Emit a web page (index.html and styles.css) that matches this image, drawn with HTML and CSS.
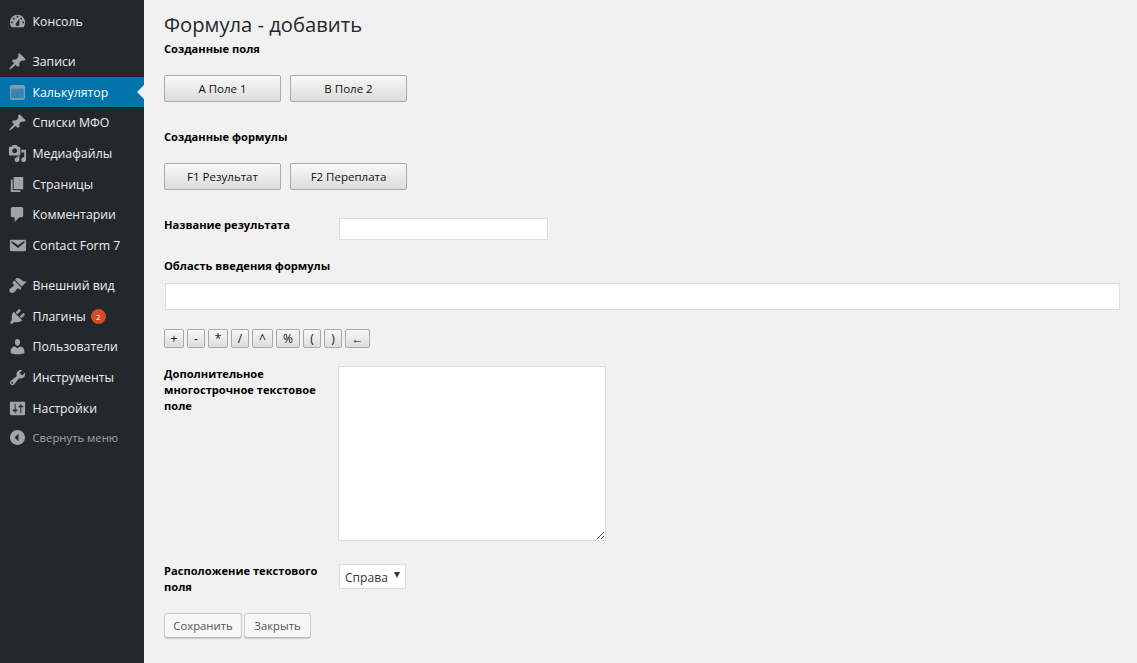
FILE: index.html
```html
<!DOCTYPE html>
<html lang="ru">
<head>
<meta charset="utf-8">
<title>Формула - добавить</title>
<link rel="stylesheet" href="styles.css">
</head>
<body>
<div class="app">
  <nav class="sidebar">
    <ul class="menu">
      <li class="item"><svg class="ic" viewBox="0 0 20 20"><path fill-rule="evenodd" d="M3.76 16h12.48c1.1-1.37 1.76-3.11 1.76-5 0-4.42-3.58-8-8-8s-8 3.58-8 8c0 1.89.66 3.63 1.76 5zM10 4c.55 0 1 .45 1 1s-.45 1-1 1-1-.45-1-1 .45-1 1-1zM6 6c.55 0 1 .45 1 1s-.45 1-1 1-1-.45-1-1 .45-1 1-1zm8 0c.55 0 1 .45 1 1s-.45 1-1 1-1-.45-1-1 .45-1 1-1zm-5.37 5.55L12 7v6c0 1.1-.9 2-2 2s-2-.9-2-2c0-.57.24-1.08.63-1.45zM4 10c.55 0 1 .45 1 1s-.45 1-1 1-1-.45-1-1 .45-1 1-1zm12 0c.55 0 1 .45 1 1s-.45 1-1 1-1-.45-1-1 .45-1 1-1z"/></svg>Консоль</li>
      <li class="item sep"><svg class="ic" viewBox="0 0 20 20"><path d="M10.44 3.02l1.82-1.82 6.36 6.35-1.83 1.82c-1.05-.68-2.48-.57-3.41.36l-.75.75c-.92.93-1.04 2.35-.35 3.41l-1.83 1.82-2.41-2.41-2.8 2.79c-.42.42-3.38 2.71-3.8 2.29s1.86-3.39 2.28-3.81l2.79-2.79L4.1 9.36l1.83-1.82c1.05.69 2.48.57 3.4-.36l.75-.75c.93-.92 1.05-2.35.36-3.41z"/></svg>Записи</li>
      <li class="item active"><svg class="ic" viewBox="0 0 20 20"><rect class="calc-body" x="2" y="2" width="16" height="16" rx="2.500"/><rect class="calc-top" x="3.500" y="6" width="13" height="10"/><path class="calc-red" d="M3.500 7.500h7"/><path class="calc-grid" d="M4 10h12M4 13h12M8 8v8M12 8v8"/></svg>Калькулятор</li>
      <li class="item"><svg class="ic" viewBox="0 0 20 20"><path d="M10.44 3.02l1.82-1.82 6.36 6.35-1.83 1.82c-1.05-.68-2.48-.57-3.41.36l-.75.75c-.92.93-1.04 2.35-.35 3.41l-1.83 1.82-2.41-2.41-2.8 2.79c-.42.42-3.38 2.71-3.8 2.29s1.86-3.39 2.28-3.81l2.79-2.79L4.1 9.36l1.83-1.82c1.05.69 2.48.57 3.4-.36l.75-.75c.93-.92 1.05-2.35.36-3.41z"/></svg>Списки МФО</li>
      <li class="item"><svg class="ic" viewBox="0 0 20 20"><path d="M13 11V4c0-.55-.45-1-1-1h-1.67L9 1H5L3.67 3H2c-.55 0-1 .45-1 1v7c0 .55.45 1 1 1h10c.55 0 1-.45 1-1zM7 4.500c1.38 0 2.500 1.120 2.500 2.500S8.380 9.500 7 9.500 4.500 8.380 4.500 7 5.620 4.500 7 4.500zM14 6h5v10.500c0 1.380-1.120 2.500-2.500 2.500S14 17.880 14 16.500s1.120-2.500 2.500-2.500c.17 0 .34.02.5.05V9h-3V6zm-4 8.050V13h2v3.500c0 1.380-1.120 2.500-2.500 2.500S7 17.880 7 16.500 8.120 14 9.500 14c.17 0 .34.02.5.05z"/></svg>Медиафайлы</li>
      <li class="item"><svg class="ic" viewBox="0 0 20 20"><path d="M6 15V2h10v13H6zm-1 1h8v2H3V5h2v11z"/></svg>Страницы</li>
      <li class="item"><svg class="ic" viewBox="0 0 20 20"><path d="M5 2h9c1.100 0 2 .9 2 2v7c0 1.100-.9 2-2 2h-2l-5 5v-5H5c-1.100 0-2-.9-2-2V4c0-1.100.9-2 2-2z"/></svg>Комментарии</li>
      <li class="item"><svg class="ic" viewBox="0 0 20 20"><path d="M3.870 4h13.250C18.370 4 19 4.590 19 5.790v8.420c0 1.190-.63 1.790-1.880 1.790H3.870c-1.250 0-1.880-.6-1.880-1.790V5.790c0-1.200.63-1.790 1.880-1.790zm6.620 8.600l6.740-5.530c.24-.2.43-.66.13-1.070-.29-.41-.82-.42-1.170-.17l-5.700 3.860L4.800 5.830c-.35-.25-.88-.24-1.170.17-.3.41-.11.87.13 1.070z"/></svg>Contact Form 7</li>
      <li class="item sep-wide"><svg class="ic" viewBox="0 0 20 20"><path d="M14.480 11.060L7.410 3.990l1.500-1.500c.5-.56 2.300-.47 3.510.32 1.210.8 1.430 1.280 2.910 2.100 1.180.64 2.450 1.260 4.450.85zm-.71.71L6.700 4.700 4.930 6.470c-.39.39-.39 1.020 0 1.410l1.060 1.060c.39.39.39 1.030 0 1.420-.6.6-1.430 1.110-2.210 1.690-.35.26-.7.53-1.010.84C1.430 13.230.78 15.600 2.170 17s3.770.76 5.120-.59c.31-.31.58-.66.84-1.010.58-.78 1.090-1.610 1.690-2.210.39-.39 1.020-.39 1.410 0l1.060 1.060c.39.39 1.020.39 1.410 0z"/></svg>Внешний вид</li>
      <li class="item"><svg class="ic" viewBox="0 0 20 20"><path d="M13.110 4.360L9.870 7.600 8 5.730l3.240-3.240c.35-.34 1.050-.2 1.560.32.52.51.66 1.210.31 1.550zm-8 1.770l.91-1.120 9.010 9.010-1.190.84c-.71.71-2.630 1.160-3.820 1.160H6.140L4.900 17.260c-.59.59-1.540.59-2.120 0-.59-.58-.59-1.530 0-2.120l1.240-1.240v-3.880c0-1.130.4-3.190 1.090-3.890zm7.260 3.970l3.240-3.240c.34-.35 1.040-.21 1.550.31.52.51.66 1.210.31 1.550l-3.240 3.250z"/></svg>Плагины<span class="badge">2</span></li>
      <li class="item"><svg class="ic" viewBox="0 0 20 20"><path d="M10 9.250c-2.270 0-2.730-3.440-2.730-3.440C7 4.020 7.820 2 9.970 2c2.160 0 2.980 2.020 2.710 3.810 0 0-.41 3.440-2.680 3.440zm0 2.570L12.720 10c2.390 0 4.520 2.330 4.520 4.530v2.490s-3.650 1.130-7.240 1.130c-3.650 0-7.240-1.130-7.240-1.130v-2.490c0-2.250 1.940-4.480 4.470-4.480z"/></svg>Пользователи</li>
      <li class="item"><svg class="ic" viewBox="0 0 20 20"><path d="M16.680 9.770c-1.340 1.340-3.300 1.670-4.950.99l-5.410 6.520c-.99.99-2.590.99-3.580 0s-.99-2.590 0-3.570l6.520-5.420c-.68-1.650-.35-3.610.99-4.950 1.280-1.280 3.120-1.620 4.720-1.060l-2.890 2.890 2.820 2.820 2.860-2.870c.53 1.580.18 3.390-1.080 4.650zM3.810 16.210c.4.39 1.040.39 1.430 0 .4-.4.4-1.040 0-1.430-.39-.4-1.030-.4-1.430 0-.39.39-.39 1.030 0 1.430z"/></svg>Инструменты</li>
      <li class="item"><svg class="ic" viewBox="0 0 20 20"><path fill-rule="evenodd" d="M18 16V4c0-.55-.45-1-1-1H3c-.55 0-1 .45-1 1v12c0 .55.45 1 1 1h14c.55 0 1-.45 1-1zM8 11h1c.55 0 1 .45 1 1s-.45 1-1 1H8v1.500c0 .28-.22.5-.5.5s-.5-.22-.5-.5V13H6c-.55 0-1-.45-1-1s.45-1 1-1h1V5.500c0-.28.22-.5.5-.5s.5.22.5.5V11zm5-2h-1c-.55 0-1-.45-1-1s.45-1 1-1h1V5.500c0-.28.22-.5.5-.5s.5.22.5.5V7h1c.55 0 1 .45 1 1s-.45 1-1 1h-1v5.500c0 .28-.22.5-.5.5s-.5-.22-.5-.5V9z"/></svg>Настройки</li>
      <li class="item collapse"><svg class="ic" viewBox="0 0 20 20"><path fill-rule="evenodd" d="M10 2.160c4.330 0 7.840 3.510 7.840 7.840s-3.510 7.840-7.840 7.840S2.160 14.330 2.160 10 5.670 2.160 10 2.160zM11 14V6l-4 4z"/></svg>Свернуть меню</li>
    </ul>
  </nav>
  <main class="content">
    <h1 class="title">Формула - добавить</h1>
    <h2 class="label">Созданные поля</h2>
    <div class="btn-row">
      <button class="chip">A Поле 1</button>
      <button class="chip">B Поле 2</button>
    </div>
    <h2 class="label formulas">Созданные формулы</h2>
    <div class="btn-row">
      <button class="chip">F1 Результат</button>
      <button class="chip">F2 Переплата</button>
    </div>
    <div class="field result">
      <label class="label side">Название результата</label>
      <input class="input short" type="text">
    </div>
    <h2 class="label area">Область введения формулы</h2>
    <input class="input wide" type="text">
    <div class="ops">
      <button class="op op-20">+</button>
      <button class="op op-18">-</button>
      <button class="op op-20">*</button>
      <button class="op op-18">/</button>
      <button class="op op-21">^</button>
      <button class="op op-24">%</button>
      <button class="op op-18">(</button>
      <button class="op op-18">)</button>
      <button class="op op-25">←</button>
    </div>
    <div class="field notes">
      <label class="label side">Дополнительное многострочное текстовое поле</label>
      <textarea class="textarea"></textarea>
    </div>
    <div class="field place">
      <label class="label side">Расположение текстового поля</label>
      <div class="select-wrap"><select class="select"><option>Справа</option></select></div>
    </div>
    <div class="actions">
      <button class="action save">Сохранить</button>
      <button class="action close">Закрыть</button>
    </div>
  </main>
</div>
</body>
</html>
```
FILE: styles.css
```css
* { box-sizing: border-box; }
html, body { margin: 0; height: 100%; }
body {
  background: #f1f1f1;
  font-family: "Open Sans", sans-serif;
  font-size: 13px;
  color: #444;
  overflow: hidden;
}
.app { display: flex; min-height: 663px; }
.sidebar { width: 144px; flex: none; background: #23282d; padding-top: 6.1px; }
.menu { list-style: none; margin: 0; padding: 0; }
.item {
  position: relative;
  display: flex;
  align-items: center;
  height: 30.67px;
  padding-left: 7.5px;
  color: #eee;
  font-size: 12.3px;
  white-space: nowrap;
}
.sep { margin-top: 9.33px; }
.sep-wide { margin-top: 9.63px; }
.ic { width: 19px; height: 19px; margin-right: 6px; flex: none; fill: #a0a5aa; }
.active { background: #0073aa; color: #fff; }
.active::after {
  content: "";
  position: absolute;
  right: 0;
  top: 50%;
  margin-top: -7px;
  border: 7px solid transparent;
  border-right-color: #f1f1f1;
  border-left-width: 0;
}
.calc-body { fill: #7d9db3; }
.calc-top { fill: #2f82b4; }
.calc-red { fill: none; stroke: #a87a80; stroke-width: 1; }
.calc-grid { fill: none; stroke: #3f8aba; stroke-width: .5; }
.badge {
  display: inline-flex;
  align-items: center;
  justify-content: center;
  width: 15px;
  height: 15px;
  margin-left: 5px;
  border-radius: 50%;
  background: #d54e21;
  color: #fff;
  font-size: 8px;
}
.collapse { color: #a0a5aa; font-size: 11.3px; margin-top: -1.5px; }
.content { flex: 1; min-width: 0; padding: 11px 17px 0 20px; }
.title {
  margin: 0 0 3px;
  font-size: 20.2px;
  line-height: 27px;
  font-weight: 400;
  color: #23282d;
}
.label {
  display: block;
  margin: 0;
  font-size: 11.15px;
  line-height: 16px;
  font-weight: 700;
  color: #000;
}
.btn-row { display: flex; gap: 9px; margin-top: 18px; }
.chip {
  width: 117px;
  height: 27px;
  padding: 0;
  border: 1px solid #aaa;
  border-radius: 2px;
  background: linear-gradient(#f8f8f8, #dcdcdc);
  font: 11.5px "Open Sans", sans-serif;
  color: #111;
}
.formulas { margin-top: 27px; }
.field { display: flex; }
.field .side { width: 175px; flex: none; padding-right: 20px; margin-top: -1px; }
.result { margin-top: 28px; }
.input {
  display: block;
  height: 23px;
  border: 1px solid #ddd;
  background: #fff;
  padding: 0 6px;
  outline: none;
}
.short { width: 209px; height: 22px; }
.area { margin-top: 18px; }
.wide { width: 955px; height: 27px; margin: 9px 0 0 1px; }
.ops { display: flex; gap: 3px; margin-top: 19px; }
.op {
  height: 19px;
  padding: 0;
  border: 1px solid #aaa;
  border-radius: 2px;
  background: linear-gradient(#f8f8f8, #dcdcdc);
  font: 12px "Open Sans", sans-serif;
  color: #112;
}
.op-18 { width: 18px; }
.op-20 { width: 20px; }
.op-21 { width: 21px; }
.op-24 { width: 24px; }
.op-25 { width: 25px; }
.notes { margin-top: 18px; }
.notes .side { padding-top: 1px; width: 174px; }
.textarea {
  display: block;
  width: 268px;
  height: 175px;
  border: 1px solid #ddd;
  background: #fff;
  outline: none;
}
.place { margin-top: 23px; }
.select-wrap { position: relative; }
.select-wrap::after {
  content: "";
  position: absolute;
  right: 6px;
  top: 8px;
  border-style: solid;
  border-width: 6px 3px 0;
  border-color: #32373c transparent transparent;
  pointer-events: none;
}
.select {
  display: block;
  height: 25px;
  width: 67px;
  border: 1px solid #ddd;
  background: #fff;
  font: 12.1px "Open Sans", sans-serif;
  color: #32373c;
  border-radius: 0;
  padding: 2px 0 0 5px;
  appearance: none;
  outline: none;
}
.actions { display: flex; gap: 2px; margin-top: 18px; }
.action {
  height: 25px;
  padding: 0;
  border: 1px solid #ccc;
  border-bottom-color: #bbb;
  border-radius: 3px;
  background: #f7f7f7;
  box-shadow: 0 1px 0 #ccc;
  font: 11.3px "Open Sans", sans-serif;
  color: #555;
}
.save { width: 78px; }
.close { width: 67px; }
```
